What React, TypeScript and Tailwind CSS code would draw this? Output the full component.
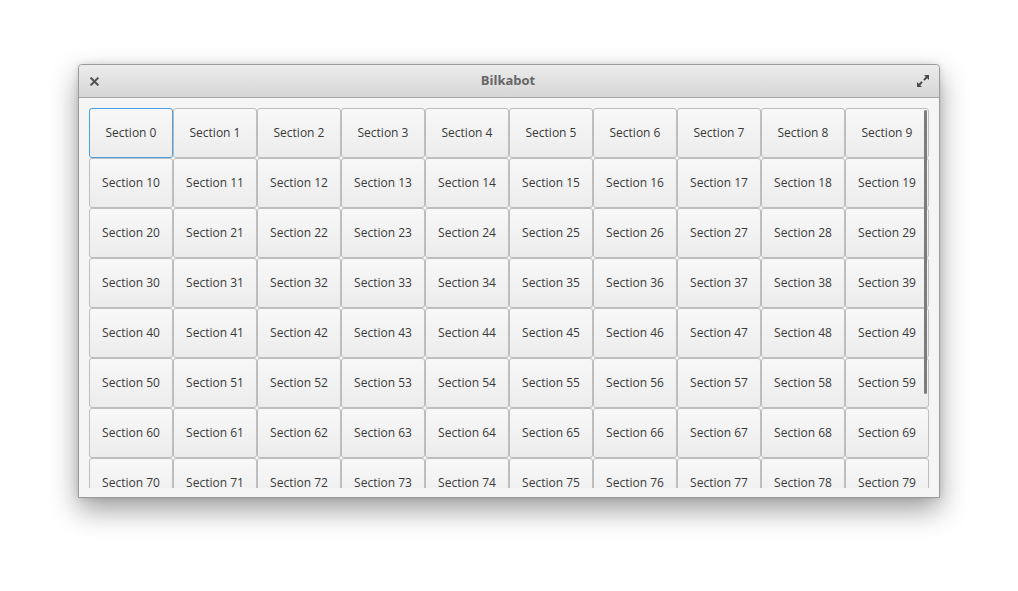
import { useState } from "react";

const sections = Array.from({ length: 80 }, (_, i) => i);

function CloseIcon() {
  return (
    <svg width="9" height="9" viewBox="0 0 9 9">
      <path d="M1.3 1.3 L7.7 7.7 M7.7 1.3 L1.3 7.7" stroke="#555555" strokeWidth="2" strokeLinecap="square" />
    </svg>
  );
}

function MaximizeIcon() {
  return (
    <svg width="14" height="14" viewBox="0 0 14 14">
      <path d="M8 1 H13 V6 L11.2 4.2 L8.6 6.8 L7.2 5.4 L9.8 2.8 Z" fill="#4a4a4a" />
      <path d="M6 13 H1 V8 L2.8 9.8 L5.4 7.2 L6.8 8.6 L4.2 11.2 Z" fill="#4a4a4a" />
    </svg>
  );
}

export default function App() {
  const [active, setActive] = useState(0);

  return (
    <div className="min-h-screen bg-white pl-[78px] pt-[64px] font-['Open_Sans',sans-serif]">
      <div className="w-[862px] h-[434px] flex flex-col rounded-t-[4px] border border-[#9a9a9a] bg-[#f5f5f5] shadow-[0_12px_28px_rgba(0,0,0,0.38),0_0_6px_rgba(0,0,0,0.12)]">
        <div className="h-[33px] flex items-center justify-between pl-[11px] pr-[9px] rounded-t-[4px] border-b border-[#a6a6a6] bg-gradient-to-b from-[#ececec] to-[#d6d6d6]">
          <div className="w-[10px] flex items-center">
            <CloseIcon />
          </div>
          <div className="text-[13px] font-bold text-[#666666]">Bilkabot</div>
          <div className="w-[14px] flex items-center">
            <MaximizeIcon />
          </div>
        </div>
        <div className="flex-1 px-[10px] pt-[10px] pb-[9px]">
          <div className="relative h-[380px] overflow-hidden">
            <div className="grid grid-cols-[repeat(10,84px)] auto-rows-[50px]">
              {sections.map((i) => (
                <button
                  key={i}
                  onClick={() => setActive(i)}
                  className={
                    i === active
                      ? "rounded-[3px] border border-[#4a9de0] bg-gradient-to-b from-[#f8f8f8] to-[#ececec] text-[12px] text-[#3a3a3a]"
                      : "rounded-[3px] border border-[#bdbdbd] bg-gradient-to-b from-[#f8f8f8] to-[#ececec] text-[12px] text-[#3a3a3a]"
                  }
                >
                  Section {i}
                </button>
              ))}
            </div>
            <div className="absolute right-[2px] top-[2px] w-[3px] h-[284px] rounded-full bg-[#7c7c7c]" />
          </div>
        </div>
      </div>
    </div>
  );
}
